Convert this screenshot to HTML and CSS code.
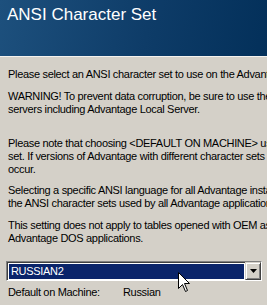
FILE: index.html
```html
<!DOCTYPE html>
<html>
<head>
<meta charset="utf-8">
<link rel="stylesheet" href="styles.css">
</head>
<body>
<div class="page">
  <div class="header">ANSI Character Set</div>
  <div class="content">
    <p class="para p1">Please select an ANSI character set to use on the Advantage Database Server.</p>
    <p class="para p2">WARNING! To prevent data corruption, be sure to use the same ANSI character set on all<br>servers including Advantage Local Server.</p>
    <p class="para p3">Please note that choosing &lt;DEFAULT ON MACHINE&gt; uses the machine's default character<br>set. If versions of Advantage with different character sets share data, corruption may<br>occur.</p>
    <p class="para p4">Selecting a specific ANSI language for all Advantage installations will guarantee that<br>the ANSI character sets used by all Advantage applications are the same.</p>
    <p class="para p5">This setting does not apply to tables opened with OEM as the character set, or<br>Advantage DOS applications.</p>
    <div class="combo">
      <div class="combo-field"><span class="combo-sel">RUSSIAN2</span></div>
      <div class="combo-btn"><svg width="7" height="4" viewBox="0 0 7 4"><path d="M0 0h7L3.5 4z" fill="#000"/></svg></div>
    </div>
    <div class="default-row">
      <span class="lbl">Default on Machine:</span>
      <span class="val">Russian</span>
    </div>
  </div>
  <svg class="cursor" width="13" height="21" viewBox="0 0 13 21">
    <path d="M0.5 0.5 V16.5 L4.5 12.5 L7.5 19.5 L9.5 18.5 L6.5 11.5 L11.5 11.5 Z" fill="#fff" stroke="#000" stroke-width="1" stroke-linejoin="miter"/>
  </svg>
</div>
</body>
</html>
```

FILE: styles.css
```css
html, body {
  margin: 0;
  padding: 0;
}
body {
  background: #d4d0c8;
  font-family: "Liberation Sans", Arial, sans-serif;
  font-size: 11px;
  color: #000;
  overflow: hidden;
}
.page {
  position: relative;
  width: 267px;
  height: 305px;
  overflow: hidden;
}
.header {
  height: 57px;
  box-sizing: border-box;
  padding: 5px 0 0 7px;
  font-size: 17px;
  line-height: 20px;
  color: #fff;
  background: linear-gradient(100deg, #1d507d 0%, #0e3c68 55%, #03305a 100%);
  border-bottom: 1px solid #f4f2ee;
}
.content {
  padding: 11px 0 0 8px;
  letter-spacing: -0.32px;
}
.para {
  margin: 0;
  line-height: 13px;
  white-space: nowrap;
}
.p2 { margin-top: 9px; }
.p3 { margin-top: 21px; }
.p4 { margin-top: 8px; }
.p5 { margin-top: 9px; }
.combo {
  margin-top: 16px;
  margin-left: -2px;
  width: 256px;
  height: 20px;
  box-sizing: border-box;
  display: flex;
  border-top: 1px solid #808080;
  border-left: 1px solid #808080;
  border-right: 1px solid #ffffff;
  border-bottom: 1px solid #ffffff;
}
.combo-field {
  flex: 1;
  display: flex;
  background: #fff;
  border-top: 1px solid #404040;
  border-left: 1px solid #404040;
  padding: 1px;
}
.combo-sel {
  flex: 1;
  background: #0a246a;
  color: #fff;
  line-height: 14px;
  padding-left: 2px;
}
.combo-btn {
  width: 16px;
  box-sizing: border-box;
  background: #d4d0c8;
  border-top: 1px solid #d4d0c8;
  border-left: 1px solid #d4d0c8;
  border-right: 1px solid #404040;
  border-bottom: 1px solid #404040;
  box-shadow: inset 1px 1px 0 #fff, inset -1px -1px 0 #808080;
  display: flex;
  align-items: center;
  justify-content: center;
}
.default-row {
  margin-top: 5px;
  display: flex;
  line-height: 13px;
}
.lbl { width: 115px; }
.cursor {
  position: absolute;
  left: 178px;
  top: 272px;
}
```
